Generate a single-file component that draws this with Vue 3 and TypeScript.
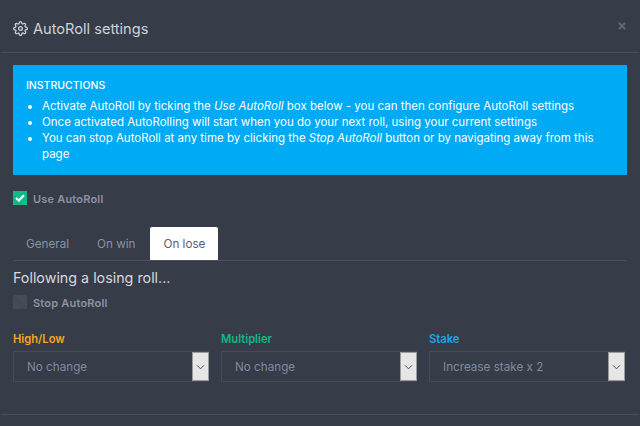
<script setup lang="ts">
interface Field { label: string; value: string; tone: string }
const tabs = ['General', 'On win', 'On lose']
const fields: Field[] = [
  { label: 'High/Low', value: 'No change', tone: 'amber' },
  { label: 'Multiplier', value: 'No change', tone: 'green' },
  { label: 'Stake', value: 'Increase stake x 2', tone: 'blue' },
]
</script>

<template>
  <div class="modal">
    <header class="head">
      <h1 class="title">
        <svg class="gear" viewBox="0 0 24 24" width="15" height="15" fill="none" stroke="currentColor" stroke-width="2" stroke-linecap="round" stroke-linejoin="round">
          <circle cx="12" cy="12" r="3" />
          <path d="M19.4 15a1.65 1.65 0 0 0 .33 1.82l.06.06a2 2 0 1 1-2.83 2.83l-.06-.06a1.65 1.65 0 0 0-2.82 1.17V21a2 2 0 1 1-4 0v-.09a1.65 1.65 0 0 0-2.82-1.17l-.06.06a2 2 0 1 1-2.83-2.83l.06-.06a1.65 1.65 0 0 0-1.17-2.82H3a2 2 0 1 1 0-4h.09a1.65 1.65 0 0 0 1.17-2.82l-.06-.06a2 2 0 1 1 2.83-2.83l.06.06a1.65 1.65 0 0 0 2.82-1.17V3a2 2 0 1 1 4 0v.09a1.65 1.65 0 0 0 2.82 1.17l.06-.06a2 2 0 1 1 2.83 2.83l-.06.06a1.65 1.65 0 0 0 1.17 2.82H21a2 2 0 1 1 0 4h-.09a1.65 1.65 0 0 0-1.51 1z" />
        </svg>
        <span>AutoRoll settings</span>
      </h1>
      <svg class="close" viewBox="0 0 10 10" width="8" height="8" stroke="currentColor" stroke-width="2.6">
        <path d="M1 1l8 8M9 1l-8 8" />
      </svg>
    </header>

    <section class="body">
      <div class="notice">
        <h2 class="notice-title">INSTRUCTIONS</h2>
        <ul class="notice-list">
          <li>Activate AutoRoll by ticking the <em>Use AutoRoll</em> box below - you can then configure AutoRoll settings</li>
          <li>Once activated AutoRolling will start when you do your next roll, using your current settings</li>
          <li>You can stop AutoRoll at any time by clicking the <em>Stop AutoRoll</em> button or by navigating away from this page</li>
        </ul>
      </div>

      <label class="check check-main">
        <span class="box on">
          <svg viewBox="0 0 12 10" width="10" height="8" fill="none" stroke="#fff" stroke-width="2.6"><path d="M1 5l3.5 3.2L11 1.5" /></svg>
        </span>
        <span class="check-text">Use AutoRoll</span>
      </label>

      <nav class="tabs">
        <a v-for="(t, i) in tabs" :key="t" class="tab" :class="{ active: i === 2 }">{{ t }}</a>
      </nav>

      <h3 class="sub">Following a losing roll...</h3>

      <label class="check check-stop">
        <span class="box off"></span>
        <span class="check-text">Stop AutoRoll</span>
      </label>

      <div class="fields">
        <div v-for="f in fields" :key="f.label" class="field">
          <div class="field-label" :class="f.tone">{{ f.label }}</div>
          <div class="select">
            <span class="select-value">{{ f.value }}</span>
            <span class="select-btn">
              <svg viewBox="0 0 10 6" width="9" height="6" fill="none" stroke="#444" stroke-width="1"><path d="M1 1l4 4 4-4" /></svg>
            </span>
          </div>
        </div>
      </div>
    </section>

    <footer class="foot"></footer>
  </div>
</template>

<style>
html, body { margin: 0; background: #363c48; }
</style>

<style scoped>
.modal {
  width: 640px;
  height: 426px;
  overflow: hidden;
  background: #363c48;
  font-family: "Inter", "Liberation Sans", sans-serif;
  color: #fff;
}
.head {
  height: 52px;
  border-bottom: 1px solid #4a4e5a;
  margin: 0 1px;
  padding: 0 12px;
  display: flex;
  align-items: center;
  justify-content: space-between;
}
.title {
  margin: 5px 0 0;
  display: flex;
  align-items: center;
  gap: 5px;
  font-size: 14.6px;
  font-weight: 400;
  color: #cfd2d8;
  height: 20px;
}
.gear { color: #cfd2d8; }
.close { color: #5d6474; margin: 0 1px 1px 0; }
.body { padding: 12px 13px 0; }
.notice {
  background: #00aaf5;
  height: 110px;
  box-sizing: border-box;
  padding: 13px 13px 0;
  color: #fff;
  font-size: 11.5px;
  line-height: 16px;
}
.notice-title { margin: 0 0 4px; font-size: 10.5px; font-weight: 500; line-height: 16px; }
.notice-list { margin: 0; padding: 0 0 0 16px; }
.check { display: flex; align-items: center; gap: 6px; height: 14px; }
.check-main { margin-top: 16px; }
.check-stop { margin-top: 7px; }
.box {
  width: 14px;
  height: 14px;
  display: flex;
  align-items: center;
  justify-content: center;
  flex: none;
}
.box.on { background: #12b886; }
.box.off { background: repeating-linear-gradient(45deg, #4a4e5a 0 1px, #434753 1px 2px); }
.check-text {
  font-size: 11px;
  font-weight: 600;
  color: #8d93a3;
  letter-spacing: .2px;
  line-height: 16px;
  padding-top: 1px;
}
.tabs {
  margin-top: 22px;
  height: 33px;
  display: flex;
  gap: 2px;
  border-bottom: 1px solid #4a4e5a;
}
.tab {
  padding: 0 13px;
  height: 33px;
  line-height: 34px;
  font-size: 11.7px;
  color: #8d93a3;
}
.tab.active { background: #fff; color: #5b6070; border-radius: 2px 2px 0 0; }
.sub { margin: 7px 0 0; font-size: 14.3px; font-weight: 400; color: #d6d8dd; line-height: 20px; }
.fields {
  margin-top: 22px;
  display: grid;
  grid-template-columns: repeat(3, 196px);
  column-gap: 12px;
}
.field-label { font-size: 11.2px; font-weight: 600; line-height: 16px; }
.amber { color: #f5a623; }
.green { color: #12b886; }
.blue { color: #1ba6e8; }
.select {
  margin-top: 4px;
  height: 31px;
  box-sizing: border-box;
  border: 1px solid #454a56;
  display: flex;
  align-items: center;
  justify-content: space-between;
}
.select-value { padding-left: 13px; font-size: 11.7px; color: #7f8aa0; }
.select-btn {
  width: 17px;
  height: 29px;
  background: #e6e6e6;
  border: 1px solid #9a9a9a;
  box-sizing: border-box;
  margin-right: -1px;
  display: flex;
  align-items: center;
  justify-content: center;
}
.foot { margin: 32px 1px 0; border-top: 1px solid #4a4e5a; }
</style>
